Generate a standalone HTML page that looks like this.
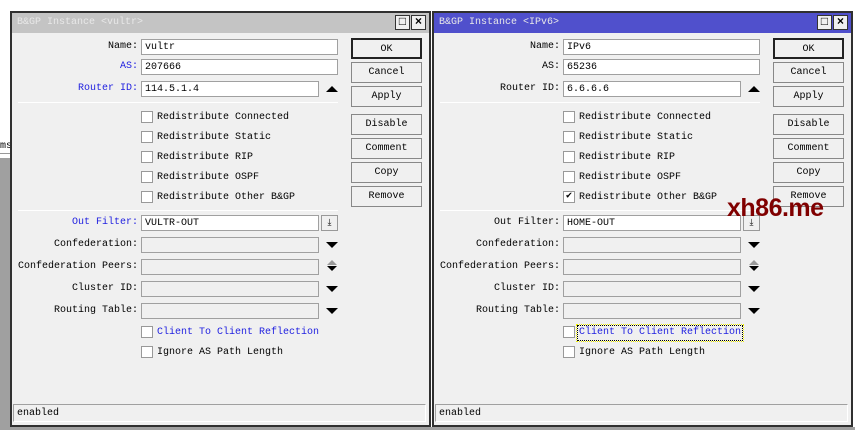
<!DOCTYPE html><html><head><style>
*{box-sizing:border-box;margin:0;padding:0}
body{width:855px;height:430px;position:relative;overflow:hidden;background:#fff;font-family:"Liberation Mono",monospace;font-size:10px;color:#000}
.a{position:absolute}
.win{position:absolute;top:11px;width:421px;height:416px;background:#f0f0f0;border:2px solid #303030}
.win>div:not(.tb):not(.tbtn){transform:translateY(1px)}
.tb{position:absolute;left:0;top:0;right:0;height:20px;color:#e8e8e8;padding:4px 0 0 5px;font-size:10px}
.tbtn{position:absolute;top:2px;width:15px;height:15px;border:1px solid #333;background:#f0f0f0;font-size:12px;font-weight:bold;text-align:center;line-height:13px;color:#000}
.lbl{position:absolute;right:291px;text-align:right;white-space:nowrap;line-height:16px}
.inp{position:absolute;left:129px;height:16px;background:#fff;border:1px solid #a0a0a0;padding-left:3px;line-height:15px}
.dis{background:#f0f0f0}
.btn{position:absolute;left:339px;width:71px;height:21px;border:1px solid #888;background:#f0f0f0;text-align:center;line-height:20px}
.cb{position:absolute;left:129px;width:12px;height:12px;background:#fff;border:1px solid #999}
.ct{position:absolute;left:145px;line-height:12px;white-space:nowrap;margin-top:1px}
.sep{position:absolute;left:6px;width:320px;height:1px;background:#c8c8c8;border-bottom:1px solid #fff}
.dn{position:absolute;left:314px;width:0;height:0;border-left:6px solid transparent;border-right:6px solid transparent;border-top:6px solid #000}
.up{position:absolute;left:314px;width:0;height:0;border-left:6px solid transparent;border-right:6px solid transparent;border-bottom:6px solid #000}
.blue{color:#2020e0}
</style></head><body>
<div class="a" style="left:0;top:158px;width:10px;height:272px;background:#a0a0a0"></div>
<div class="a" style="left:0;top:427px;width:855px;height:3px;background:#a0a0a0"></div>
<div class="a" style="left:0;top:141px;font-size:10px">ms</div>
<div class="a" style="left:0;top:153px;width:10px;height:1px;background:#999"></div>

<div class="win" style="left:10px">
<div class="tb" style="background:#c4c4c4">B&amp;GP Instance &lt;vultr&gt;</div>
<div class="tbtn" style="left:383px">□</div><div class="tbtn" style="left:399px">×</div>
<div class="lbl" style="top:25px">Name:</div><div class="inp" style="top:25px;width:197px">vultr</div>
<div class="lbl blue" style="top:45px">AS:</div><div class="inp" style="top:45px;width:197px">207666</div>
<div class="lbl blue" style="top:67px">Router ID:</div><div class="inp" style="top:67px;width:178px">114.5.1.4</div>
<div class="up" style="top:72px"></div>
<div class="sep" style="top:88px"></div>
<div class="cb" style="top:97px"></div><div class="ct" style="top:97px">Redistribute Connected</div>
<div class="cb" style="top:117px"></div><div class="ct" style="top:117px">Redistribute Static</div>
<div class="cb" style="top:137px"></div><div class="ct" style="top:137px">Redistribute RIP</div>
<div class="cb" style="top:157px"></div><div class="ct" style="top:157px">Redistribute OSPF</div>
<div class="cb" style="top:177px"></div><div class="ct" style="top:177px">Redistribute Other B&amp;GP</div>
<div class="sep" style="top:196px"></div>
<div class="lbl blue" style="top:201px">Out Filter:</div><div class="inp" style="top:201px;width:178px">VULTR-OUT</div>
<div class="a" style="left:309px;top:201px;width:17px;height:16px;border:1px solid #999;text-align:center;font-size:9px;line-height:14px">&#x2913;</div>
<div class="lbl" style="top:223px">Confederation:</div><div class="inp dis" style="top:223px;width:178px"></div><div class="dn" style="top:228px"></div>
<div class="lbl" style="top:245px">Confederation Peers:</div><div class="inp dis" style="top:245px;width:178px"></div>
<div class="up" style="top:246px;border-bottom-color:#999;border-width:0 5px 5px;left:315px"></div><div class="dn" style="top:252px;border-width:5px 5px 0;left:315px"></div>
<div class="lbl" style="top:267px">Cluster ID:</div><div class="inp dis" style="top:267px;width:178px"></div><div class="dn" style="top:272px"></div>
<div class="lbl" style="top:289px">Routing Table:</div><div class="inp dis" style="top:289px;width:178px"></div><div class="dn" style="top:294px"></div>
<div class="cb" style="top:312px"></div><div class="ct blue" style="top:312px">Client To Client Reflection</div>
<div class="cb" style="top:332px"></div><div class="ct" style="top:332px">Ignore AS Path Length</div>
<div class="btn" style="top:24px;border:2px solid #222">OK</div>
<div class="btn" style="top:48px">Cancel</div>
<div class="btn" style="top:72px">Apply</div>
<div class="btn" style="top:100px">Disable</div>
<div class="btn" style="top:124px">Comment</div>
<div class="btn" style="top:148px">Copy</div>
<div class="btn" style="top:172px">Remove</div>
<div class="a" style="left:1px;top:390px;width:413px;height:18px;border:1px solid #a0a0a0;border-right-color:#fff;border-bottom-color:#fff;padding:3px 0 0 3px">enabled</div>
</div>

<div class="win" style="left:432px">
<div class="tb" style="background:#5050cc">B&amp;GP Instance &lt;IPv6&gt;</div>
<div class="tbtn" style="left:383px">□</div><div class="tbtn" style="left:399px">×</div>
<div class="lbl" style="top:25px">Name:</div><div class="inp" style="top:25px;width:197px">IPv6</div>
<div class="lbl" style="top:45px">AS:</div><div class="inp" style="top:45px;width:197px">65236</div>
<div class="lbl" style="top:67px">Router ID:</div><div class="inp" style="top:67px;width:178px">6.6.6.6</div>
<div class="up" style="top:72px"></div>
<div class="sep" style="top:88px"></div>
<div class="cb" style="top:97px"></div><div class="ct" style="top:97px">Redistribute Connected</div>
<div class="cb" style="top:117px"></div><div class="ct" style="top:117px">Redistribute Static</div>
<div class="cb" style="top:137px"></div><div class="ct" style="top:137px">Redistribute RIP</div>
<div class="cb" style="top:157px"></div><div class="ct" style="top:157px">Redistribute OSPF</div>
<div class="cb" style="top:177px;font-size:10px;line-height:10px;text-align:center">✔</div><div class="ct" style="top:177px">Redistribute Other B&amp;GP</div>
<div class="sep" style="top:196px"></div>
<div class="lbl" style="top:201px">Out Filter:</div><div class="inp" style="top:201px;width:178px">HOME-OUT</div>
<div class="a" style="left:309px;top:201px;width:17px;height:16px;border:1px solid #999;text-align:center;font-size:9px;line-height:14px">&#x2913;</div>
<div class="lbl" style="top:223px">Confederation:</div><div class="inp dis" style="top:223px;width:178px"></div><div class="dn" style="top:228px"></div>
<div class="lbl" style="top:245px">Confederation Peers:</div><div class="inp dis" style="top:245px;width:178px"></div>
<div class="up" style="top:246px;border-bottom-color:#999;border-width:0 5px 5px;left:315px"></div><div class="dn" style="top:252px;border-width:5px 5px 0;left:315px"></div>
<div class="lbl" style="top:267px">Cluster ID:</div><div class="inp dis" style="top:267px;width:178px"></div><div class="dn" style="top:272px"></div>
<div class="lbl" style="top:289px">Routing Table:</div><div class="inp dis" style="top:289px;width:178px"></div><div class="dn" style="top:294px"></div>
<div class="cb" style="top:312px"></div><div class="ct blue" style="top:310px;left:143px;padding:1px 1px;border:1px dotted #000;outline:1px dotted #ee0;background:#f0f0f0">Client To Client Reflection</div>
<div class="cb" style="top:332px"></div><div class="ct" style="top:332px">Ignore AS Path Length</div>
<div class="btn" style="top:24px;border:2px solid #222">OK</div>
<div class="btn" style="top:48px">Cancel</div>
<div class="btn" style="top:72px">Apply</div>
<div class="btn" style="top:100px">Disable</div>
<div class="btn" style="top:124px">Comment</div>
<div class="btn" style="top:148px">Copy</div>
<div class="btn" style="top:172px">Remove</div>
<div class="a" style="left:1px;top:390px;width:413px;height:18px;border:1px solid #a0a0a0;border-right-color:#fff;border-bottom-color:#fff;padding:3px 0 0 3px">enabled</div>
</div>
<div class="a" style="left:727px;top:194px;font-family:'Liberation Sans',sans-serif;font-weight:bold;font-size:25px;color:#800000;letter-spacing:-0.5px">xh86.me</div>
</body></html>
